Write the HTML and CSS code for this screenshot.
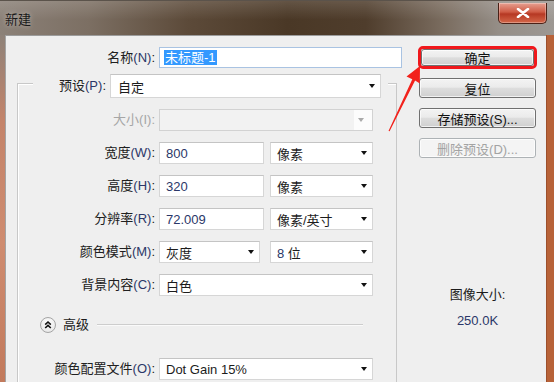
FILE: index.html
```html
<!doctype html>
<html lang="zh-CN">
  <head>
    <meta charset="UTF-8" />
    <meta name="viewport" content="width=device-width, initial-scale=1.0" />
    <title>新建</title>
    <link rel="stylesheet" href="styles.css">
  </head>
  <body>
    <div class="window">
      <div class="titlebar">
        <span class="title">新建</span>
        <span class="close">
          <svg width="14" height="10" viewBox="0 0 14 10">
            <path d="M2 1 L12 9 M12 1 L2 9" stroke="#fff" stroke-width="2.6" stroke-linecap="round" />
          </svg>
        </span>
      </div>

      <div class="frame">
        <div class="client">
          <div class="form">
            <div class="name-row">
              <span class="lbl">名称<span class="key">(N)</span>:</span>
              <div class="field name-field"><span class="picked">未标题-1</span></div>
            </div>

            <div class="group">
              <div class="preset-row">
                <span class="lbl">预设<span class="key">(P)</span>:</span>
                <div class="field select"><span>自定</span><i class="arrow"></i></div>
              </div>

              <div class="rows">
                <span class="lbl off">大小(I):</span>
                <div class="field select disabled span2"><span></span><i class="arrow"></i></div>

                <span class="lbl">宽度<span class="key">(W)</span>:</span>
                <div class="field num">800</div>
                <div class="field select"><span>像素</span><i class="arrow"></i></div>

                <span class="lbl">高度<span class="key">(H)</span>:</span>
                <div class="field num">320</div>
                <div class="field select"><span>像素</span><i class="arrow"></i></div>

                <span class="lbl">分辨率<span class="key">(R)</span>:</span>
                <div class="field num">72.009</div>
                <div class="field select"><span>像素/英寸</span><i class="arrow"></i></div>

                <span class="lbl">颜色模式<span class="key">(M)</span>:</span>
                <div class="field select narrow"><span>灰度</span><i class="arrow"></i></div>
                <div class="field select"><span><span class="key">8</span> 位</span><i class="arrow"></i></div>

                <span class="lbl">背景内容<span class="key">(C)</span>:</span>
                <div class="field select span2"><span>白色</span><i class="arrow"></i></div>
              </div>

              <div class="advanced">
                <span class="toggle">
                  <svg width="14" height="14" viewBox="0 0 14 14">
                    <path d="M4.2 6.6 L7 4 L9.8 6.6 M4.2 10 L7 7.4 L9.8 10" fill="none" stroke="#111" stroke-width="1.6" />
                  </svg>
                </span>
                <span class="adv-text">高级</span>
                <span class="rule"></span>
              </div>

              <div class="rows profile">
                <span class="lbl">颜色配置文件<span class="key">(O)</span>:</span>
                <div class="field select span2"><span>Dot Gain 15%</span><i class="arrow"></i></div>
              </div>
            </div>
          </div>

          <div class="side">
            <div class="mark"><span class="btn">确定</span></div>
            <span class="btn first">复位</span>
            <span class="btn">存储预设(S)...</span>
            <span class="btn off">删除预设(D)...</span>
            <div class="info">图像大小:</div>
            <div class="info size">250.0K</div>
          </div>
        </div>
      </div>

      <!-- annotation arrow pointing at the OK button -->
      <svg class="callout" width="554" height="382" viewBox="0 0 554 382">
        <polygon points="420,66 406.5,76.5 412.3,79.2 388.5,131 389.6,131.3 415.1,80.6 419.8,83.4" fill="#f2221c" />
      </svg>
    </div>
  </body>
</html>
```

FILE: styles.css
```css
* {
  box-sizing: border-box;
}
body {
  margin: 0;
  width: 554px;
  height: 382px;
  overflow: hidden;
  font-family: "Liberation Sans", "Noto Sans CJK SC", sans-serif;
  font-size: 13px;
  color: #1c1c1c;
  background: #b8653f;
}
.window {
  position: relative;
  height: 382px;
  overflow: hidden;
  display: flex;
  flex-direction: column;
}
.titlebar {
  height: 35px;
  flex: none;
  display: flex;
  justify-content: space-between;
  align-items: flex-start;
  padding: 0 7px 0 5px;
  border-top: 1px solid #5b534b;
  background:
    linear-gradient(rgba(255, 255, 255, 0.14), rgba(255, 255, 255, 0) 55%),
    linear-gradient(
      90deg,
      #8b8178 0%,
      #7c6f63 16%,
      #5c4a39 34%,
      #4a3826 52%,
      #4f3d2c 66%,
      #7a6c5f 80%,
      #958e87 90%,
      #9d9893 100%
    );
}
.title {
  margin-top: 11px;
  line-height: 16px;
  color: #1a1a1a;
  text-shadow: 0 0 5px rgba(255, 255, 255, 0.5);
}
.close {
  width: 49px;
  height: 21px;
  margin-top: 2px;
  display: flex;
  align-items: center;
  justify-content: center;
  border: 1px solid #4a2016;
  border-top: none;
  border-radius: 0 0 5px 5px;
  background: linear-gradient(#e7a091, #cf5b45 45%, #b63823 55%, #d4684a);
  box-shadow: inset 0 0 0 1px rgba(255, 255, 255, 0.3);
}
.frame {
  flex: 1;
  min-height: 0;
  display: flex;
  background:
    linear-gradient(90deg, transparent 0 546px, #9c4f2c 546px 547px, #b86238 547px),
    linear-gradient(#8e8279, #c4846a 25%, #cf8c70 60%, #c27a5c);
}
.client {
  margin-left: 5px;
  width: 541px;
  background: #efefef;
  border-left: 1px solid #a4a4a4;
  border-top: 1px solid #9c9c9c;
  display: grid;
  grid-template-columns: 412px 119px;
  align-items: start;
}

/* labels */
.lbl {
  text-align: right;
  line-height: 22px;
  white-space: nowrap;
  color: #202020;
}
.lbl.off {
  color: #a6a6a6;
}
.key {
  color: #2b3768;
}

/* fields */
.field {
  height: 22px;
  display: flex;
  align-items: center;
  padding-left: 6px;
  background: #fff;
  border: 1px solid #d6d6d6;
  border-top-color: #c4c4c4;
  white-space: nowrap;
}
.num {
  color: #2b3768;
  width: 105px;
}
.select {
  justify-content: space-between;
  padding-right: 5px;
}
.arrow {
  width: 0;
  height: 0;
  border-left: 3.5px solid transparent;
  border-right: 3.5px solid transparent;
  border-top: 4px solid #111;
}
.select.disabled {
  background: linear-gradient(90deg, #f2f2f2 0 194px, #fcfcfc 194px);
  border-color: #d2d2d2;
}
.select.disabled .arrow {
  border-top-color: #aaa;
  margin-right: 3px;
}
.narrow {
  width: 101px;
}
.span2 {
  grid-column: 2 / 4;
}

.name-row {
  margin-top: 11px;
  display: grid;
  grid-template-columns: 149px 243px;
  column-gap: 4px;
}
.name-field {
  height: 21px;
  padding-left: 4px;
  border-color: #a9c3e2;
}
.picked {
  background: #3399ff;
  color: #fff;
  padding: 0 1px;
  line-height: 15px;
}

/* group box */
.group {
  margin: 14px 0 0 11px;
  width: 380px;
  height: 300px;
  border: 1px solid #c8c8c8;
  border-bottom: none;
  box-shadow: inset 1px 1px 0 #fff;
}
.preset-row {
  margin: -10px 8px 0 15px;
  display: grid;
  grid-template-columns: 73px 271px;
  column-gap: 4px;
  background: #efefef;
}
.preset-row .lbl {
  line-height: 24px;
}
.preset-row .field {
  height: 24px;
  padding-left: 7px;
}
.rows {
  margin-top: 11px;
  display: grid;
  grid-template-columns: 141px 111px 103px;
  grid-auto-rows: 22px;
  row-gap: 11px;
}
.rows .lbl {
  padding-right: 4px;
}
.rows .field:not(.span2):not(.num):not(.narrow) {
  width: 103px;
}
.advanced {
  margin: 21px 33px 0 22px;
  height: 16px;
  display: flex;
  align-items: center;
}
.toggle {
  width: 16px;
  height: 16px;
  border-radius: 50%;
  border: 1px solid #a5a5a5;
  background: radial-gradient(circle at 50% 35%, #fff, #e2e2e2);
  display: flex;
  align-items: center;
  justify-content: center;
}
.adv-text {
  margin-left: 7px;
  line-height: 16px;
}
.rule {
  flex: 1;
  margin-left: 8px;
  height: 2px;
  border-top: 1px solid #cdcdcd;
  border-bottom: 1px solid #fafafa;
}
.profile {
  margin-top: 25px;
}

/* buttons column */
.side {
  padding-top: 10px;
  display: flex;
  flex-direction: column;
}
.btn {
  width: 117px;
  height: 20px;
  margin: 10px 0 0 1px;
  display: flex;
  align-items: center;
  justify-content: center;
  border: 1px solid #707070;
  border-radius: 3px;
  background: linear-gradient(#f3f3f3, #ebebeb 45%, #dddddd 52%, #cfcfcf);
  box-shadow: inset 0 0 0 1px rgba(255, 255, 255, 0.7);
  color: #111;
  white-space: nowrap;
}
.btn.first {
  margin-top: 9px;
}
.btn.off {
  border-color: #adb2b5;
  background: #f4f4f4;
  color: #a3a3a3;
}
.mark {
  width: 119px;
  height: 23px;
  border: 3px solid #f0181c;
  border-radius: 5px;
}
.mark .btn {
  width: 100%;
  height: 100%;
  margin: 0;
}
.info {
  margin-top: 129px;
  text-align: center;
  line-height: 16px;
}
.info.size {
  margin-top: 10px;
  color: #2b3768;
}

.callout {
  position: absolute;
  top: 0;
  left: 0;
  pointer-events: none;
}
```
